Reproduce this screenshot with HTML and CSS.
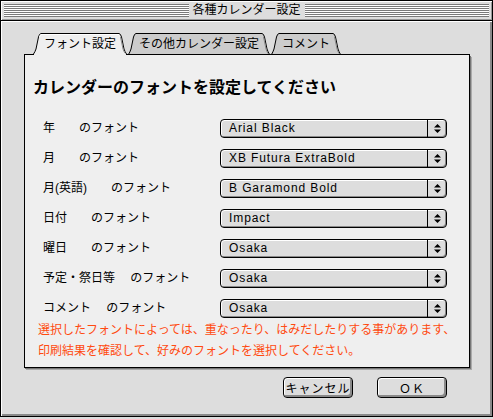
FILE: index.html
```html
<!DOCTYPE html>
<html lang="ja">
<head>
<meta charset="utf-8">
<title>各種カレンダー設定</title>
<link rel="stylesheet" href="styles.css">
</head>
<body>
<div class="window">
  <div class="titlebar">
    <div class="stripes"></div>
    <div class="title">各種カレンダー設定</div>
    <div class="stripes"></div>
  </div>
  <div class="content">
    <div class="tabs">
      <div class="tab-spacer lead"></div>
      <div class="tab active">
        <svg class="edge" width="8" height="22" viewBox="0 0 8 22"><path d="M0 22 L1 20 L3 16 L5.5 4 Q6.5 0.5 8 0.5 L8 22 Z" fill="#efefef"/><path d="M0.5 22 L0.5 21 Q2 19 3 16 L5.5 4 Q6.5 0.5 8 0.5" fill="none" stroke="#000"/><path d="M6.5 4 Q7 1.8 8 1.5" fill="none" stroke="#fff"/></svg>
        <span class="tab-label">フォント設定</span>
        <svg class="edge" width="8" height="22" viewBox="0 0 8 22"><path d="M0 0.5 Q1.5 0.5 2.5 4 L5 16 Q6 19 8 21 L8 22 L0 22 Z" fill="#efefef"/><path d="M0 0.5 Q1.5 0.5 2.5 4 L5 16 Q6 19 7.5 21 L7.5 22" fill="none" stroke="#000"/><path d="M1.5 4 L4 16 Q4.8 18.5 6 20" fill="none" stroke="#8a8a8a"/></svg>
      </div>
      <div class="tab-spacer gap"></div>
      <div class="tab">
        <svg class="edge" width="8" height="22" viewBox="0 0 8 22"><path d="M0 21 L1 20 L3 16 L5.5 4 Q6.5 0.5 8 0.5 L8 21 Z" fill="#cccccc"/><path d="M0 21.5 L0.5 21.5 Q2 19 3 16 L5.5 4 Q6.5 0.5 8 0.5" fill="none" stroke="#000"/><path d="M0 21.5 H8" stroke="#000"/></svg>
        <span class="tab-label">その他カレンダー設定</span>
        <svg class="edge" width="8" height="22" viewBox="0 0 8 22"><path d="M0 0.5 Q1.5 0.5 2.5 4 L5 16 Q6 19 8 21 L0 21 Z" fill="#cccccc"/><path d="M0 0.5 Q1.5 0.5 2.5 4 L5 16 Q6 19 7.5 21.5 L8 21.5" fill="none" stroke="#000"/><path d="M1.5 4 L4 16 Q4.8 18.5 6 20.5" fill="none" stroke="#8a8a8a"/><path d="M0 21.5 H8" stroke="#000"/></svg>
      </div>
      <div class="tab-spacer gap"></div>
      <div class="tab">
        <svg class="edge" width="8" height="22" viewBox="0 0 8 22"><path d="M0 21 L1 20 L3 16 L5.5 4 Q6.5 0.5 8 0.5 L8 21 Z" fill="#cccccc"/><path d="M0 21.5 L0.5 21.5 Q2 19 3 16 L5.5 4 Q6.5 0.5 8 0.5" fill="none" stroke="#000"/><path d="M0 21.5 H8" stroke="#000"/></svg>
        <span class="tab-label">コメント</span>
        <svg class="edge" width="8" height="22" viewBox="0 0 8 22"><path d="M0 0.5 Q1.5 0.5 2.5 4 L5 16 Q6 19 8 21 L0 21 Z" fill="#cccccc"/><path d="M0 0.5 Q1.5 0.5 2.5 4 L5 16 Q6 19 7.5 21.5 L8 21.5" fill="none" stroke="#000"/><path d="M1.5 4 L4 16 Q4.8 18.5 6 20.5" fill="none" stroke="#8a8a8a"/><path d="M0 21.5 H8" stroke="#000"/></svg>
      </div>
      <div class="tab-spacer fill"></div>
    </div>
    <div class="panel">
      <h1 class="heading">カレンダーのフォントを設定してください</h1>
      <div class="rows">
        <div class="label">年　　のフォント</div>
        <div class="popup"><span class="popup-value">Arial Black</span><span class="popup-arrows"><svg width="9" height="11" viewBox="0 0 9 11"><path d="M1 4.5 L4.5 1 L8 4.5 Z M1 6.5 L4.5 10 L8 6.5 Z" fill="#000"/></svg></span></div>
        <div class="label">月　　のフォント</div>
        <div class="popup"><span class="popup-value">XB Futura ExtraBold</span><span class="popup-arrows"><svg width="9" height="11" viewBox="0 0 9 11"><path d="M1 4.5 L4.5 1 L8 4.5 Z M1 6.5 L4.5 10 L8 6.5 Z" fill="#000"/></svg></span></div>
        <div class="label">月(英語)　　のフォント</div>
        <div class="popup"><span class="popup-value">B Garamond Bold</span><span class="popup-arrows"><svg width="9" height="11" viewBox="0 0 9 11"><path d="M1 4.5 L4.5 1 L8 4.5 Z M1 6.5 L4.5 10 L8 6.5 Z" fill="#000"/></svg></span></div>
        <div class="label">日付　　のフォント</div>
        <div class="popup"><span class="popup-value">Impact</span><span class="popup-arrows"><svg width="9" height="11" viewBox="0 0 9 11"><path d="M1 4.5 L4.5 1 L8 4.5 Z M1 6.5 L4.5 10 L8 6.5 Z" fill="#000"/></svg></span></div>
        <div class="label">曜日　　のフォント</div>
        <div class="popup"><span class="popup-value">Osaka</span><span class="popup-arrows"><svg width="9" height="11" viewBox="0 0 9 11"><path d="M1 4.5 L4.5 1 L8 4.5 Z M1 6.5 L4.5 10 L8 6.5 Z" fill="#000"/></svg></span></div>
        <div class="label">予定・祭日等　 のフォント</div>
        <div class="popup"><span class="popup-value">Osaka</span><span class="popup-arrows"><svg width="9" height="11" viewBox="0 0 9 11"><path d="M1 4.5 L4.5 1 L8 4.5 Z M1 6.5 L4.5 10 L8 6.5 Z" fill="#000"/></svg></span></div>
        <div class="label">コメント　 のフォント</div>
        <div class="popup"><span class="popup-value">Osaka</span><span class="popup-arrows"><svg width="9" height="11" viewBox="0 0 9 11"><path d="M1 4.5 L4.5 1 L8 4.5 Z M1 6.5 L4.5 10 L8 6.5 Z" fill="#000"/></svg></span></div>
      </div>
      <p class="note">選択したフォントによっては、重なったり、はみだしたりする事があります、<br>印刷結果を確認して、好みのフォントを選択してください。</p>
    </div>
    <div class="buttons">
      <button class="btn">キャンセル</button>
      <button class="btn">ＯＫ</button>
    </div>
  </div>
</div>
</body>
</html>
```

FILE: styles.css
```css
html {
  background: #dddddd;
}
body {
  margin: 0;
  font-family: "Liberation Sans", "Noto Sans CJK JP", sans-serif;
  font-size: 12px;
  color: #000;
}
.window {
  width: 493px;
  height: 417px;
  box-sizing: border-box;
  border: 1px solid #000;
  background: #dddddd;
  display: flex;
  flex-direction: column;
}
.titlebar {
  height: 19px;
  border-bottom: 1px solid #000;
  display: flex;
  align-items: center;
  padding: 0 3px;
  background: #dddddd;
  box-shadow: inset 1px 1px 0 #fff, inset -1px -1px 0 #999;
}
.stripes {
  flex: 1;
  height: 13px;
  background: repeating-linear-gradient(to bottom, #7a7a7a 0 1px, #ffffff 1px 2px);
  box-shadow: inset 0 -1px 0 #7a7a7a;
}
.title {
  padding: 0 4px;
  line-height: 19px;
  white-space: nowrap;
}
.content {
  flex: 1;
  padding: 12px 22px 0 23px;
  box-shadow: inset 1px 1px 0 #fff, inset -2px -2px 0 #8a8a8a;
}
.tabs {
  display: flex;
  height: 22px;
}
.tab-spacer {
  box-sizing: border-box;
  height: 22px;
  border-bottom: 1px solid #000;
}
.tab-spacer.lead {
  width: 9px;
}
.tab-spacer.gap {
  width: 1px;
}
.tab-spacer.fill {
  flex: 1;
}
.tab {
  display: flex;
  height: 22px;
}
.edge {
  display: block;
  flex: none;
}
.tab-label {
  box-sizing: border-box;
  height: 22px;
  padding: 0 3px;
  border-top: 1px solid #000;
  border-bottom: 1px solid #000;
  background: #cccccc;
  line-height: 20px;
  white-space: nowrap;
}
.tab.active .tab-label {
  background: #efefef;
  border-bottom-color: #efefef;
  box-shadow: inset 0 1px 0 #fff;
}
.panel {
  background: #efefef;
  border: 1px solid #000;
  border-top: none;
  padding: 23px 0 5px;
  box-shadow: 1px 1px 0 #777, 2px 2px 0 #aaa;
}
.heading {
  margin: 0 0 21px 8px;
  font-size: 16px;
  font-weight: bold;
  line-height: 20px;
  white-space: nowrap;
}
.rows {
  display: grid;
  grid-template-columns: 177px 227px;
  grid-auto-rows: 19px;
  row-gap: 11px;
  padding-left: 18px;
}
.label {
  line-height: 19px;
  white-space: nowrap;
}
.popup {
  box-sizing: border-box;
  display: flex;
  border: 1px solid #000;
  border-radius: 4px;
  background: #dddddd;
  box-shadow: inset 1px 1px 0 #fff, inset -1px -1px 0 #8a8a8a;
}
.popup-value {
  flex: 1;
  padding-left: 8px;
  line-height: 17px;
  letter-spacing: 0.9px;
  white-space: nowrap;
}
.popup-arrows {
  width: 18px;
  border-left: 1px solid #000;
  display: flex;
  align-items: center;
  justify-content: center;
}
.popup-arrows svg {
  display: block;
}
.note {
  margin: 2px 0 0 13px;
  color: #ff4a10;
  line-height: 21px;
  white-space: nowrap;
}
.buttons {
  display: flex;
  justify-content: flex-end;
  gap: 24px;
  margin-top: 9px;
  padding-right: 23px;
}
.btn {
  box-sizing: border-box;
  width: 70px;
  height: 21px;
  padding: 0;
  border: 1px solid #000;
  border-radius: 4px;
  background: #dddddd;
  font-family: "Liberation Sans", "Noto Sans CJK JP", sans-serif;
  font-size: 12px;
  color: #000;
  letter-spacing: 1px;
  box-shadow: inset 1px 1px 0 #fff, inset -2px -2px 0 #8a8a8a;
}
```
